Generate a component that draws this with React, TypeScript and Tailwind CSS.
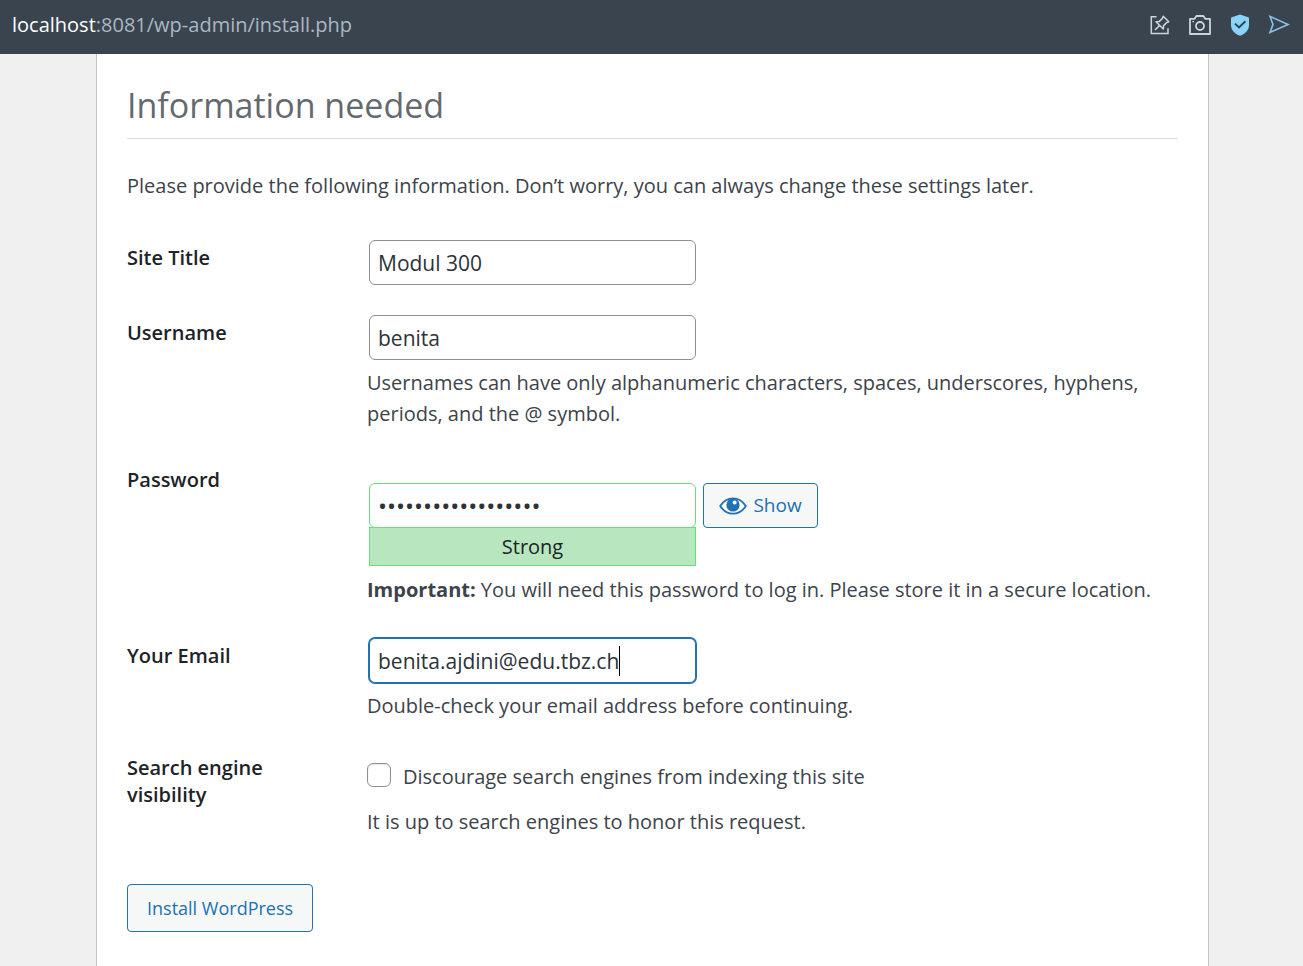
import type { ReactNode } from "react";

const inputBase =
  "block h-[45px] w-full rounded-[6px] border bg-white px-2 text-[#2c3338] outline-none";

function PinIcon() {
  return (
    <svg width="20" height="20" viewBox="0 0 20 20" fill="none" stroke="currentColor" strokeWidth="1.5">
      <path d="M6.5 1.8H1.3V18.5H18V13.2" />
      <path d="M13.2 1.2L18.8 6.8L16.6 7.6L13.6 10.6L13.3 14L6 6.7L9.4 6.4L12.4 3.4Z" strokeLinejoin="round" />
      <path d="M9.6 10.4L5 15" />
    </svg>
  );
}

function CameraIcon() {
  return (
    <svg width="24" height="22" viewBox="0 0 24 22" fill="none" stroke="currentColor" strokeWidth="1.8" strokeLinejoin="round">
      <path d="M2 4.8H6.6L8.4 2H15.4L17.2 4.8H22V20H2Z" />
      <circle cx="12" cy="12" r="4" />
      <path d="M4.4 7.6H6" strokeWidth="1.4" />
    </svg>
  );
}

function ShieldIcon() {
  return (
    <svg width="20" height="22" viewBox="0 0 20 22" fill="none">
      <path d="M10 0.4L18.2 3.2Q19 3.5 19 4.4V11C19 16 15.5 19.6 10 21.8C4.5 19.6 1 16 1 11V4.4Q1 3.5 1.8 3.2Z" fill="#8ad4fc" />
      <path d="M5 9.6L9 13.4L15.4 7.2" stroke="#2f4350" strokeWidth="2" />
    </svg>
  );
}

function SendIcon() {
  return (
    <svg width="22" height="20" viewBox="0 0 22 20" fill="none" stroke="#86c1e6" strokeWidth="1.6" strokeLinejoin="miter">
      <path d="M2 1.4L20 9.4L2 17.4L5 9.4Z" />
    </svg>
  );
}

function EyeIcon() {
  return (
    <svg width="28" height="18" viewBox="0 0 28 18" aria-hidden="true">
      <path d="M1.2 9C4.5 3.8 9 1.3 14 1.3S23.5 3.8 26.8 9C23.5 14.2 19 16.7 14 16.7S4.5 14.2 1.2 9Z" fill="#fff" stroke="#2271b1" strokeWidth="1.8" />
      <circle cx="14" cy="8" r="6.6" fill="#2271b1" />
      <circle cx="15.6" cy="5.4" r="2" fill="#fff" />
    </svg>
  );
}

function Row({ label, htmlFor, className, children }: { label: string; htmlFor: string; className: string; children: ReactNode }) {
  return (
    <div className="grid grid-cols-[240px_1fr]">
      <label htmlFor={htmlFor} className="pt-[19px] pr-16 text-[20px] leading-[27px] font-semibold text-[#1d2327]">
        {label}
      </label>
      <div className={className}>{children}</div>
    </div>
  );
}

export default function App() {
  return (
    <div className="flex min-h-screen flex-col bg-[#f0f0f1] font-['Open_Sans',sans-serif] text-[20px] leading-[31px] text-[#3c434a]">
      <header className="flex h-[54px] items-center justify-between bg-[#3a444f] pr-[13px] pb-1 pl-3">
        <p className="pb-0.5 text-[20px] text-[#aab7c4]">
          <span className="text-white">localhost</span>:8081/wp-admin/install.php
        </p>
        <div className="flex items-center gap-[18px] text-[#cdd5dc]">
          <button type="button" aria-label="Edit page"><PinIcon /></button>
          <button type="button" aria-label="Take snapshot"><CameraIcon /></button>
          <button type="button" aria-label="Site protection"><ShieldIcon /></button>
          <button type="button" aria-label="Send page"><SendIcon /></button>
        </div>
      </header>

      <div className="flex grow flex-col pr-[94px] pl-24">
        <main className="grow border-x border-[#c3c4c7] bg-white px-[30px] pb-[34px]">
          <h1 className="border-b border-[#dcdcde] pt-[26px] pb-2 text-[34px] leading-[50px] text-[#646970]">
            Information needed
          </h1>
          <p className="pt-[31px] pb-6">
            Please provide the following information. Don’t worry, you can always change these settings later.
          </p>

          <form onSubmit={(e) => e.preventDefault()}>
            <Row label="Site Title" htmlFor="title" className="py-[15px]">
              <div className="mx-0.5 max-w-[327px]">
                <input id="title" type="text" defaultValue="Modul 300" className={`${inputBase} border-[#8c8f94] text-[21px]`} />
              </div>
            </Row>

            <Row label="Username" htmlFor="user" className="pt-[15px] pb-[18px]">
              <div className="mx-0.5 max-w-[327px]">
                <input id="user" type="text" defaultValue="benita" className={`${inputBase} border-[#8c8f94] text-[21px]`} />
              </div>
              <p className="pt-[7px]">
                Usernames can have only alphanumeric characters, spaces, underscores, hyphens, periods, and the @ symbol.
              </p>
            </Row>

            <Row label="Password" htmlFor="pass" className="pt-9 pb-[18px]">
              <div className="flex items-start gap-[7px] pl-0.5">
                <div className="w-full max-w-[327px]">
                  <input id="pass" type="password" defaultValue="correct-horse-9182" className={`${inputBase} border-[#68de7c] text-[24px]`} />
                  <div className="-mt-px flex h-[39px] items-center justify-center border border-[#68de7c] bg-[#b8e6bf] text-[#1d2327]">
                    Strong
                  </div>
                </div>
                <button type="button" className="flex h-[45px] w-[115px] shrink-0 items-center justify-center gap-1.5 rounded-[4px] border border-[#2271b1] bg-[#f6f7f7] text-[19px] text-[#2271b1]">
                  <EyeIcon />
                  Show
                </button>
              </div>
              <p className="pt-2">
                <strong className="font-bold">Important:</strong> You will need this password to log in. Please store it in a secure location.
              </p>
            </Row>

            <Row label="Your Email" htmlFor="email" className="pt-[15px] pb-[14px]">
              <div className="relative mx-0.5 max-w-[327px]">
                <input
                  id="email"
                  type="email"
                  autoFocus
                  defaultValue="benita.ajdini@edu.tbz.ch"
                  className={`${inputBase} border-[#2271b1] text-[21px] caret-transparent ring-1 ring-[#2271b1]`}
                />
                <div aria-hidden="true" className="pointer-events-none absolute inset-y-0 left-[9px] flex items-center text-[21px]">
                  <span className="invisible">benita.ajdini@edu.tbz.ch</span>
                  <span className="h-[30px] w-px bg-black" />
                </div>
              </div>
              <p className="pt-[7px]">Double-check your email address before continuing.</p>
            </Row>

            <Row label="Search engine visibility" htmlFor="noindex" className="pt-[26px]">
              <label className="flex items-center gap-3">
                <input
                  id="noindex"
                  type="checkbox"
                  className="mb-1 size-6 shrink-0 appearance-none rounded-[6px] border border-[#8c8f94] bg-white shadow-[inset_0_1px_2px_rgba(0,0,0,0.1)] checked:bg-[#2271b1]"
                />
                Discourage search engines from indexing this site
              </label>
              <p className="pt-[14px]">It is up to search engines to honor this request.</p>
            </Row>

            <button type="submit" className="mt-[47px] flex h-12 items-center rounded-[4px] border border-[#2271b1] bg-[#f6f7f7] px-[19px] text-[18px] text-[#2271b1]">
              Install WordPress
            </button>
          </form>
        </main>
      </div>
    </div>
  );
}
